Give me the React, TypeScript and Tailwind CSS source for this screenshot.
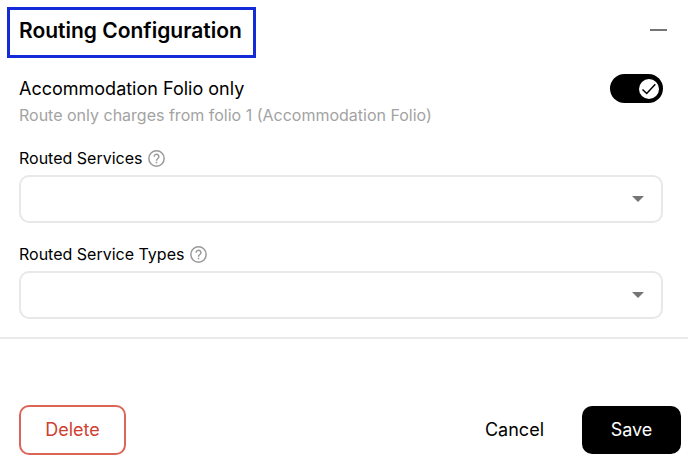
import { useState } from "react";

function HelpIcon() {
  return (
    <svg viewBox="0 0 16 16" className="size-[17px]" fill="none" stroke="#9a9a9a" strokeWidth="1.4" aria-hidden="true">
      <circle cx="8" cy="8" r="7.2" />
      <path d="M5.8 6.3a2.2 2.2 0 1 1 3.5 1.7C8.5 8.6 8 9 8 10" />
      <path d="M8 11v1.5" />
    </svg>
  );
}

function SelectField({ id, label }: { id: string; label: string }) {
  return (
    <div>
      <div className="flex h-6 items-center gap-1.5">
        <label htmlFor={id} className="text-base leading-6">
          {label}
        </label>
        <button type="button" aria-label={`About ${label}`}>
          <HelpIcon />
        </button>
      </div>
      <div className="relative mt-[5px]">
        <select
          id={id}
          defaultValue=""
          className="block h-12 w-full appearance-none rounded-[10px] border-2 border-[#e8e8e8] bg-white px-4"
        >
          <option value=""></option>
        </select>
        <svg
          viewBox="0 0 12 6"
          className="pointer-events-none absolute top-[21px] right-[19px] h-1.5 w-3"
          fill="#757575"
          aria-hidden="true"
        >
          <path d="M0 0h12L6 6z" />
        </svg>
      </div>
    </div>
  );
}

function FolioSwitch() {
  const [on, setOn] = useState(true);
  return (
    <label
      className={`relative flex h-[29px] w-[53px] shrink-0 cursor-pointer items-center rounded-full px-1 ${
        on ? "justify-end bg-black" : "justify-start bg-gray-400"
      }`}
    >
      <input
        id="folio-only"
        type="checkbox"
        role="switch"
        aria-labelledby="folio-only-label"
        checked={on}
        onChange={(event) => setOn(event.target.checked)}
        className="absolute inset-0 cursor-pointer opacity-0"
      />
      <span className="flex size-5 items-center justify-center rounded-full bg-white">
        {on && (
          <svg viewBox="0 0 20 20" className="size-5" fill="none" stroke="#000" strokeWidth="1.5" aria-hidden="true">
            <path d="M3.5 10.5l4.2 4L16.3 5.2" />
          </svg>
        )}
      </span>
    </label>
  );
}

export default function App() {
  return (
    <form className="bg-white pb-2 font-['Inter',sans-serif] text-black" onSubmit={(event) => event.preventDefault()}>
      <section className="border-b-2 border-[#ebebeb] pb-[18px]">
        <header className="flex items-start justify-between pt-[7px] pr-[21px] pl-[7px]">
          <h2 className="border-3 border-[#142cd8] pt-1.5 pr-[11px] pb-2.5 pl-[9px] text-[21px] leading-[29px] font-semibold">
            Routing Configuration
          </h2>
          <button type="button" aria-label="Collapse section" className="flex h-[46px] items-center">
            <span className="h-0.5 w-[17px] bg-[#757575]" />
          </button>
        </header>

        <div className="mt-4 pr-[25px] pl-[19px]">
          <div className="flex items-start justify-between">
            <div>
              <label id="folio-only-label" htmlFor="folio-only" className="block text-lg leading-[29px]">
                Accommodation Folio only
              </label>
              <p className="text-base leading-6 text-[#a3a3a3]">Route only charges from folio 1 (Accommodation Folio)</p>
            </div>
            <FolioSwitch />
          </div>
          <div className="mt-[19px] flex flex-col gap-[19px]">
            <SelectField id="routed-services" label="Routed Services" />
            <SelectField id="routed-service-types" label="Routed Service Types" />
          </div>
        </div>
      </section>

      <footer className="mt-[66px] flex items-center pr-[7px] pl-[19px]">
        <button
          type="button"
          className="h-[50px] w-[107px] rounded-[10px] border-2 border-[#dc6559] text-lg text-[#cf3f30]"
        >
          Delete
        </button>
        <button type="button" className="mr-[38px] ml-auto h-12 text-lg">
          Cancel
        </button>
        <button type="submit" className="h-12 w-[99px] rounded-[10px] bg-black text-lg text-white">
          Save
        </button>
      </footer>
    </form>
  );
}
